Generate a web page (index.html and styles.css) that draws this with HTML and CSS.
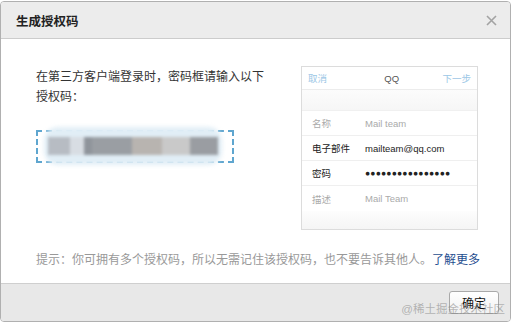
FILE: index.html
```html
<!DOCTYPE html>
<html lang="zh">
<head>
<meta charset="utf-8">
<link rel="stylesheet" href="styles.css">
</head>
<body>
<div class="dialog">
  <div class="dlg-head">
    <span class="dlg-title">生成授权码</span>
    <svg class="close" width="11" height="11" viewBox="0 0 11 11"><path d="M1 1L10 10M10 1L1 10" stroke="#a3a3a3" stroke-width="1.6"/></svg>
  </div>
  <div class="dlg-body">
    <div class="main">
      <div class="left">
        <p class="intro">在第三方客户端登录时，密码框请输入以下授权码：</p>
        <div class="codebox">
          <div class="blob"></div>
          <div class="pix">
            <span class="p1"></span><span class="p2"></span><span class="p3"></span><span class="p4"></span><span class="p5"></span><span class="p6"></span><span class="p7"></span>
          </div>
        </div>
      </div>
      <div class="phone">
        <div class="ph-head"><span class="ph-link">取消</span><span class="ph-title">QQ</span><span class="ph-link">下一步</span></div>
        <div class="ph-gap"></div>
        <div class="ph-row dim"><span class="lbl">名称</span><span class="val">Mail team</span></div>
        <div class="ph-row"><span class="lbl">电子部件</span><span class="val">mailteam@qq.com</span></div>
        <div class="ph-row"><span class="lbl">密码</span><span class="val dots">●●●●●●●●●●●●●●●●</span></div>
        <div class="ph-row dim last"><span class="lbl">描述</span><span class="val">Mail Team</span></div>
        <div class="ph-foot"></div>
      </div>
    </div>
    <p class="hint">提示：你可拥有多个授权码，所以无需记住该授权码，也不要告诉其他人。<a class="more">了解更多</a></p>
  </div>
  <div class="dlg-foot">
    <button class="ok">确定</button>
  </div>
  <div class="watermark">@稀土掘金技术社区</div>
</div>
</body>
</html>
```
FILE: styles.css
```css
* { box-sizing: border-box; }
html, body { margin: 0; padding: 0; background: #fff; }
body {
  padding-top: 1px;
  font-family: "Liberation Sans", "Noto Sans CJK SC", sans-serif;
  font-size: 12px;
  color: #333;
}
.dialog {
  position: relative;
  width: 511px;
  height: 321px;
  border: 1px solid #b0b0b0;
  border-radius: 4px;
  overflow: hidden;
  display: flex;
  flex-direction: column;
}
.dlg-head {
  height: 37px;
  flex: none;
  background: #ececec;
  border-bottom: 1px solid #cccccc;
  display: flex;
  align-items: center;
  justify-content: space-between;
  padding: 0 13px 0 15px;
}
.dlg-title {
  font-size: 12.5px;
  font-weight: bold;
  color: #222;
}
.dlg-body {
  flex: 1;
  padding: 28px 0 0 35px;
  display: flex;
  flex-direction: column;
}
.main {
  display: flex;
  height: 164px;
}
.left { width: 265px; }
.intro {
  margin: 0;
  line-height: 20px;
  color: #333;
  width: 232px;
}
.codebox {
  position: relative;
  margin-top: 23px;
  width: 198px;
  height: 33px;
  border: 2px dashed #5fa6cf;
}
.blob {
  position: absolute;
  left: 6px; right: 10px; top: -5px; bottom: -4px;
  background: #e1eef6;
  border-radius: 14px;
  filter: blur(2px);
}
.pix {
  position: absolute;
  left: 10px; top: 5px;
  width: 170px; height: 18px;
  display: flex;
  filter: blur(1.5px);
}
.pix span { height: 18px; display: block; }
.p1 { width: 22px; background: #b7bcc3; }
.p2 { width: 14px; background: #d8dde3; }
.p3 { width: 8px; background: #8f949b; }
.p4 { width: 40px; background: #9a9ea3; }
.p5 { width: 30px; background: #b8b4b0; }
.p6 { width: 28px; background: #c9c9c9; }
.p7 { width: 28px; background: #9a9da2; }
.phone {
  width: 177px;
  height: 164px;
  margin-top: -1px;
  border: 1px solid #dcdcdc;
  background: #fff;
  display: flex;
  flex-direction: column;
  font-size: 9.5px;
}
.ph-head {
  height: 23px;
  border-bottom: 1px solid #ececec;
  display: flex;
  align-items: center;
  justify-content: space-between;
  padding: 0 6px 0 6px;
  color: #555;
}
.ph-link { color: #9cc7e6; font-size: 9.5px; }
.ph-title { color: #555; font-size: 9.5px; padding-left: 14px; }
.ph-gap {
  height: 21px;
  background: linear-gradient(#fcfcfc, #f6f6f6);
  border-bottom: 1px solid #f0f0f0;
}
.ph-row {
  height: 25px;
  display: flex;
  align-items: center;
  padding-left: 10px;
  border-bottom: 1px solid #efefef;
  color: #222;
}
.ph-row.last { border-bottom: none; }
.ph-row.dim { color: #aaa; }
.lbl { width: 53px; }
.dots { font-size: 8.5px; letter-spacing: 0.2px; }
.ph-foot {
  flex: 1;
  background: linear-gradient(#fdfdfd, #f5f5f5);
}
.hint {
  margin: 20px 0 0 0;
  color: #999;
  line-height: 18px;
}
.more { color: #1f4e8f; text-decoration: none; }
.dlg-foot {
  height: 38px;
  flex: none;
  background: #e8e8e8;
  border-top: 1px solid #cfcfcf;
  display: flex;
  justify-content: flex-end;
  align-items: flex-start;
  padding: 7px 11px 0 0;
}
.ok {
  width: 50px;
  height: 23px;
  border: 1px solid #a9a9a9;
  border-radius: 3px;
  background: linear-gradient(#ffffff, #f2f2f2);
  font-family: "Liberation Sans", "Noto Sans CJK SC", sans-serif;
  font-size: 12px;
  color: #111;
  padding: 0;
}
.watermark {
  position: absolute;
  right: 5px;
  bottom: 5px;
  font-size: 11.5px;
  color: rgba(130, 130, 130, 0.55);
  pointer-events: none;
}
```
